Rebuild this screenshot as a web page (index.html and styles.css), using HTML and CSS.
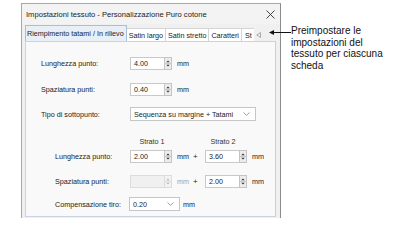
FILE: index.html
```html
<!DOCTYPE html>
<html lang="it">
<head>
<meta charset="utf-8">
<link rel="stylesheet" href="styles.css">
</head>
<body>
<div class="stage">
  <div class="window">
    <div class="titlebar">
      <span class="title">Impostazioni tessuto - Personalizzazione Puro cotone</span>
      <svg class="close" width="9" height="9" viewBox="0 0 9 9"><path d="M0.5 0.5 L8.5 8.5 M8.5 0.5 L0.5 8.5" stroke="#333" stroke-width="0.9"/></svg>
    </div>
    <div class="tabs">
      <div class="tab active">Riempimento tatami / In rilievo</div>
      <div class="tab">Satin largo</div>
      <div class="tab">Satin stretto</div>
      <div class="tab">Caratteri</div>
      <div class="tab clip">St</div>
      <div class="scroller">
        <svg width="5" height="6" viewBox="0 0 5 6"><path d="M4.5 0.5 L0.8 3 L4.5 5.5 Z" fill="none" stroke="#9a9a9a" stroke-width="0.8"/></svg>
      </div>
    </div>
    <div class="panel">
      <div class="row r1">
        <span class="label">Lunghezza punto:</span>
        <div class="spinbox"><span class="field">4.00</span><span class="spin"><svg width="7" height="11" viewBox="0 0 7 11"><path d="M1.5 4 L3.5 2 L5.5 4 Z M1.5 7 L3.5 9 L5.5 7 Z" fill="#333"/><path d="M0 5.5 H7" stroke="#aaa" stroke-width="0.6"/></svg></span></div>
        <span class="unit">mm</span>
      </div>
      <div class="row r2">
        <span class="label">Spaziatura punti:</span>
        <div class="spinbox"><span class="field">0.40</span><span class="spin"><svg width="7" height="11" viewBox="0 0 7 11"><path d="M1.5 4 L3.5 2 L5.5 4 Z M1.5 7 L3.5 9 L5.5 7 Z" fill="#333"/><path d="M0 5.5 H7" stroke="#aaa" stroke-width="0.6"/></svg></span></div>
        <span class="unit">mm</span>
      </div>
      <div class="row r3">
        <span class="label">Tipo di sottopunto:</span>
        <div class="combo wide"><span class="field">Sequenza su margine + Tatami</span><svg class="chev" width="7" height="4" viewBox="0 0 7 4"><path d="M0.5 0.5 L3.5 3.3 L6.5 0.5" fill="none" stroke="#777" stroke-width="0.7"/></svg></div>
      </div>
      <div class="row heads">
        <span class="label ind"></span>
        <span class="head h1">Strato 1</span>
        <span class="head h2">Strato 2</span>
      </div>
      <div class="row r4">
        <span class="label ind">Lunghezza punto:</span>
        <div class="spinbox"><span class="field">2.00</span><span class="spin"><svg width="7" height="11" viewBox="0 0 7 11"><path d="M1.5 4 L3.5 2 L5.5 4 Z M1.5 7 L3.5 9 L5.5 7 Z" fill="#333"/><path d="M0 5.5 H7" stroke="#aaa" stroke-width="0.6"/></svg></span></div>
        <span class="unit">mm</span>
        <span class="plus">+</span>
        <div class="spinbox"><span class="field">3.60</span><span class="spin"><svg width="7" height="11" viewBox="0 0 7 11"><path d="M1.5 4 L3.5 2 L5.5 4 Z M1.5 7 L3.5 9 L5.5 7 Z" fill="#333"/><path d="M0 5.5 H7" stroke="#aaa" stroke-width="0.6"/></svg></span></div>
        <span class="unit">mm</span>
      </div>
      <div class="row r5">
        <span class="label ind">Spaziatura punti:</span>
        <div class="spinbox disabled"><span class="field"></span><span class="spin"><svg width="7" height="11" viewBox="0 0 7 11"><path d="M1.5 4 L3.5 2 L5.5 4 Z M1.5 7 L3.5 9 L5.5 7 Z" fill="#b5b5b5"/><path d="M0 5.5 H7" stroke="#ccc" stroke-width="0.6"/></svg></span></div>
        <span class="unit dim">mm</span>
        <span class="plus">+</span>
        <div class="spinbox"><span class="field">2.00</span><span class="spin"><svg width="7" height="11" viewBox="0 0 7 11"><path d="M1.5 4 L3.5 2 L5.5 4 Z M1.5 7 L3.5 9 L5.5 7 Z" fill="#333"/><path d="M0 5.5 H7" stroke="#aaa" stroke-width="0.6"/></svg></span></div>
        <span class="unit">mm</span>
      </div>
      <div class="row r6">
        <span class="label ind">Compensazione tiro:</span>
        <div class="combo small"><span class="field">0.20</span><svg class="chev" width="7" height="4" viewBox="0 0 7 4"><path d="M0.5 0.5 L3.5 3.3 L6.5 0.5" fill="none" stroke="#777" stroke-width="0.7"/></svg></div>
        <span class="unit tight">mm</span>
      </div>
    </div>
  </div>
  <div class="callout">
    <svg class="arrow" width="22" height="7" viewBox="0 0 22 7"><path d="M3 3.5 H22" stroke="#111" stroke-width="1"/><path d="M0 3.5 L5 1 L5 6 Z" fill="#111"/></svg>
    <p class="note">Preimpostare le<br>impostazioni del<br>tessuto per ciascuna<br>scheda</p>
  </div>
</div>
</body>
</html>
```

FILE: styles.css
```css
* { box-sizing: border-box; }
html, body { margin: 0; padding: 0; background: #fff; }
body { width: 407px; height: 218px; overflow: hidden; font-family: "Liberation Sans", Arial, sans-serif; }

.stage { position: relative; width: 407px; height: 218px; padding: 3px 0 0 21px; }

.window {
  width: 260px;
  height: 230px;
  background: #f0f0f0;
  border: 1px solid #a8a8a8;
  border-right-color: #8c8c8c;
  padding: 0 3px 0 3px;
  color: #1a1a1a;
  font-size: 7.2px;
}

.titlebar {
  height: 20px;
  display: flex;
  align-items: center;
  justify-content: space-between;
  background: #f3f3f3;
  margin: 0 -3px;
  padding: 0 4px 0 4px;
}
.title { font-size: 7.6px; color: #222; }
.close { margin-right: 1px; }

.tabs {
  height: 16px;
  margin-top: 1px;
  display: flex;
  align-items: flex-end;
}
.tab {
  height: 13px;
  padding: 0 2px;
  background: #fff;
  border: 1px solid #d4d4d4;
  border-bottom: none;
  border-left: none;
  display: flex;
  align-items: center;
  white-space: nowrap;
  color: #222;
}
.tab.active {
  height: 16px;
  background: #e9eff7;
  border: 1px solid #a7bfdc;
  border-bottom: none;
  padding: 0 2px 0 1px;
}
.tab.clip { width: 12px; overflow: hidden; border-right: none; padding-left: 3px; }
.scroller { height: 13px; width: 10px; display: flex; align-items: center; justify-content: center; }

.panel {
  width: 251px;
  height: 176px;
  background: #f9f9f9;
  border: 1px solid #c8d4e3;
  border-right-color: #cfcfcf;
  padding: 14px 0 0 15px;
  display: flex;
  flex-direction: column;
}

.row { display: flex; align-items: center; height: 14px; color: #222; }
.r2 { margin-top: 12px; }
.r3 { margin-top: 11px; }
.heads { margin-top: 13px; }
.r4 { margin-top: 1px; }
.r5 { margin-top: 11px; }
.r6 { margin-top: 9px; }

.label { width: 89px; flex: none; color: #222; }
.label.ind { width: 75px; margin-left: 14px; }

.spinbox {
  display: flex;
  height: 13px;
  width: 42px;
  flex: none;
}
.spinbox .field {
  width: 34px;
  background: #fff;
  border: 1px solid #c9c9c9;
  border-right: none;
  padding-left: 3px;
  display: flex;
  align-items: center;
}
.spin {
  width: 8px;
  background: #ececec;
  border: 1px solid #c4c4c4;
  display: flex;
  align-items: center;
  justify-content: center;
}
.spinbox.disabled .field { background: #f0f0f0; border-color: #dcdcdc; }
.spinbox.disabled .spin { border-color: #dcdcdc; background: #f3f3f3; }

.unit { margin-left: 5px; width: 12px; flex: none; }
.unit.dim { color: #a0a0a0; }
.unit.tight { margin-left: 3px; }
.plus { margin-left: 4px; width: 12px; flex: none; font-size: 8px; }

.combo {
  height: 14px;
  background: #fff;
  border: 1px solid #c6c6c6;
  display: flex;
  align-items: center;
  justify-content: space-between;
  padding: 0 5px 0 3px;
  flex: none;
}
.combo.wide { width: 126px; }
.combo.small { width: 51px; margin-left: -1px; }

.head { color: #333; flex: none; text-align: center; }
.h1 { width: 42px; margin-left: 1px; }
.h2 { width: 42px; margin-left: 29px; }

.callout { position: absolute; left: 269px; top: 25px; display: flex; align-items: flex-start; }
.arrow { margin-top: 4px; flex: none; }
.note {
  margin: 0;
  flex: none;
  white-space: nowrap;
  font-family: "Liberation Sans", Arial, sans-serif;
  font-size: 10px;
  line-height: 11.7px;
  color: #111;
}
```
